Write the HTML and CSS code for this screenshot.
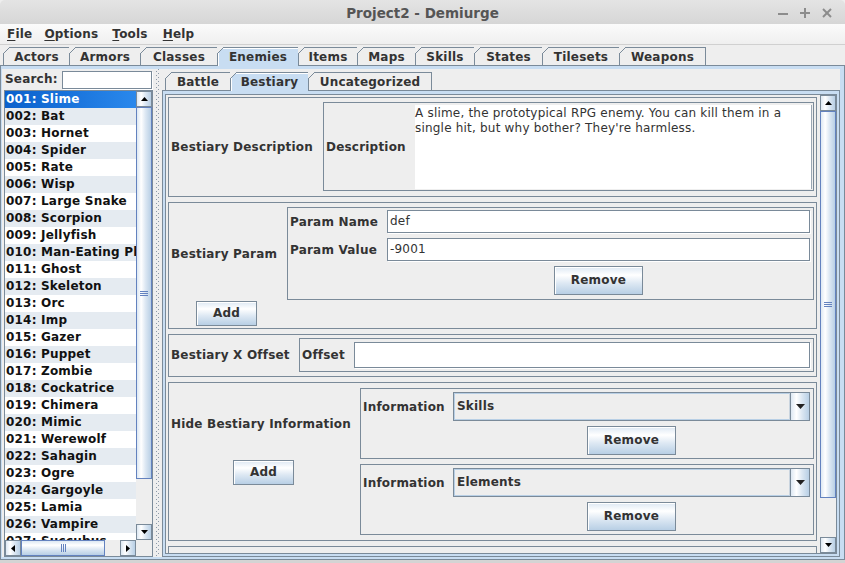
FILE: index.html
```html
<!DOCTYPE html>
<html>
<head>
<meta charset="utf-8">
<title>Project2 - Demiurge</title>
<link rel="stylesheet" href="styles.css">
</head>
<body>
<div class="window">
  <header class="titlebar">
    <div></div>
    <div class="title">Project2 - Demiurge</div>
    <div class="controls">
      <svg width="10" height="10" viewBox="0 0 10 10"><line x1="0" y1="6" x2="10" y2="6" stroke="#8c8c8c" stroke-width="2"/></svg>
      <svg width="10" height="10" viewBox="0 0 10 10"><line x1="0" y1="5" x2="10" y2="5" stroke="#8c8c8c" stroke-width="2"/><line x1="5" y1="0" x2="5" y2="10" stroke="#8c8c8c" stroke-width="2"/></svg>
      <svg width="10" height="10" viewBox="0 0 10 10"><line x1="1" y1="1" x2="9" y2="9" stroke="#8c8c8c" stroke-width="2"/><line x1="9" y1="1" x2="1" y2="9" stroke="#8c8c8c" stroke-width="2"/></svg>
    </div>
  </header>

  <nav class="menubar">
    <span class="menu"><u>F</u>ile</span>
    <span class="menu"><u>O</u>ptions</span>
    <span class="menu"><u>T</u>ools</span>
    <span class="menu"><u>H</u>elp</span>
  </nav>

  <div class="tabpane outer">
    <div class="tabrow top-tabs">
      <span class="tab">Actors</span>
      <span class="tab">Armors</span>
      <span class="tab">Classes</span>
      <span class="tab selected">Enemies</span>
      <span class="tab">Items</span>
      <span class="tab">Maps</span>
      <span class="tab">Skills</span>
      <span class="tab">States</span>
      <span class="tab">Tilesets</span>
      <span class="tab last">Weapons</span>
    </div>
    <div class="tabcontent outer-content">
      <div class="split">
        <div class="leftpane">
          <div class="searchrow">
            <span class="search-label">Search:</span>
            <div class="field search-field"></div>
          </div>
          <div class="listscroll">
            <div class="listmain">
              <div class="list">
                <div class="row sel">001: Slime</div>
                <div class="row">002: Bat</div>
                <div class="row">003: Hornet</div>
                <div class="row">004: Spider</div>
                <div class="row">005: Rate</div>
                <div class="row">006: Wisp</div>
                <div class="row">007: Large Snake</div>
                <div class="row">008: Scorpion</div>
                <div class="row">009: Jellyfish</div>
                <div class="row">010: Man-Eating Plant</div>
                <div class="row">011: Ghost</div>
                <div class="row">012: Skeleton</div>
                <div class="row">013: Orc</div>
                <div class="row">014: Imp</div>
                <div class="row">015: Gazer</div>
                <div class="row">016: Puppet</div>
                <div class="row">017: Zombie</div>
                <div class="row">018: Cockatrice</div>
                <div class="row">019: Chimera</div>
                <div class="row">020: Mimic</div>
                <div class="row">021: Werewolf</div>
                <div class="row">022: Sahagin</div>
                <div class="row">023: Ogre</div>
                <div class="row">024: Gargoyle</div>
                <div class="row">025: Lamia</div>
                <div class="row">026: Vampire</div>
                <div class="row">027: Succubus</div>
              </div>
              <div class="vscroll list-vs">
                <div class="sb-btn"><svg width="7" height="4" viewBox="0 0 7 4"><polygon points="0,4 7,4 3.5,0" fill="#000"/></svg></div>
                <div class="sb-track">
                  <div class="thumb-v list-thumb"><span class="grip-v"></span></div>
                </div>
                <div class="sb-btn"><svg width="7" height="4" viewBox="0 0 7 4"><polygon points="0,0 7,0 3.5,4" fill="#000"/></svg></div>
              </div>
            </div>
            <div class="hbar">
              <div class="hscroll">
                <div class="sb-btn"><svg width="4" height="7" viewBox="0 0 4 7"><polygon points="4,0 4,7 0,3.5" fill="#000"/></svg></div>
                <div class="sb-track-h">
                  <div class="thumb-h"><span class="grip-h"></span></div>
                </div>
                <div class="sb-btn"><svg width="4" height="7" viewBox="0 0 4 7"><polygon points="0,0 0,7 4,3.5" fill="#000"/></svg></div>
              </div>
              <div class="corner"></div>
            </div>
          </div>
        </div>

        <div class="divider"></div>

        <div class="rightpane">
          <div class="tabrow inner-tabs">
            <span class="tab">Battle</span>
            <span class="tab selected">Bestiary</span>
            <span class="tab last">Uncategorized</span>
          </div>
          <div class="tabcontent inner-content">
            <div class="scrollpane">
              <div class="viewport">
                <section class="sec s1">
                  <div class="sec-label">Bestiary Description</div>
                  <div class="box desc-box">
                    <div class="box-label">Description</div>
                    <div class="textarea">A slime, the prototypical RPG enemy. You can kill them in a<br>single hit, but why bother? They're harmless.</div>
                  </div>
                </section>

                <section class="sec s2">
                  <div class="sec-label">Bestiary Param</div>
                  <div class="box param-box">
                    <div class="box-label">Param Name</div>
                    <div class="field">def</div>
                    <div class="box-label">Param Value</div>
                    <div class="field">-9001</div>
                    <div></div>
                    <div class="btn remove">Remove</div>
                  </div>
                  <div class="btn add">Add</div>
                </section>

                <section class="sec s3">
                  <div class="sec-label">Bestiary X Offset</div>
                  <div class="box offset-box">
                    <div class="box-label">Offset</div>
                    <div class="field"></div>
                  </div>
                </section>

                <section class="sec s4">
                  <div class="sec-label">Hide Bestiary Information</div>
                  <div class="box info-box">
                    <div class="box-label">Information</div>
                    <div class="combo"><span class="combo-text">Skills</span><span class="combo-btn"><svg width="9" height="5" viewBox="0 0 9 5"><polygon points="0,0 9,0 4.5,5" fill="#222"/></svg></span></div>
                    <div></div>
                    <div class="btn remove">Remove</div>
                  </div>
                  <div class="btn add add4">Add</div>
                  <div class="box info-box">
                    <div class="box-label">Information</div>
                    <div class="combo"><span class="combo-text">Elements</span><span class="combo-btn"><svg width="9" height="5" viewBox="0 0 9 5"><polygon points="0,0 9,0 4.5,5" fill="#222"/></svg></span></div>
                    <div></div>
                    <div class="btn remove">Remove</div>
                  </div>
                </section>

                <section class="sec s5"></section>
              </div>
              <div class="vscroll main-vs">
                <div class="sb-btn"><svg width="7" height="4" viewBox="0 0 7 4"><polygon points="0,4 7,4 3.5,0" fill="#000"/></svg></div>
                <div class="sb-track">
                  <div class="thumb-v main-thumb"><span class="grip-v"></span></div>
                </div>
                <div class="sb-btn"><svg width="7" height="4" viewBox="0 0 7 4"><polygon points="0,0 7,0 3.5,4" fill="#000"/></svg></div>
              </div>
            </div>
          </div>
        </div>
      </div>
    </div>
  </div>
  <div class="frame-bottom"></div>
</div>
</body>
</html>
```
FILE: styles.css
```css
* { box-sizing: border-box; margin: 0; padding: 0; }
html, body { width: 845px; height: 563px; overflow: hidden; }
body {
  background: #eeeeee;
  font-family: "DejaVu Sans", sans-serif;
  font-size: 12px;
  letter-spacing: 0.2px;
  color: #333333;
}
.window {
  width: 845px;
  height: 563px;
  display: flex;
  flex-direction: column;
  background: #eeeeee;
}

/* title bar */
.titlebar {
  flex: none;
  height: 24px;
  display: grid;
  grid-template-columns: 1fr auto 1fr;
  align-items: center;
  padding-top: 2px;
  background: linear-gradient(#e4e4e4, #d6d6d6);
  border-radius: 5px 5px 0 0;
}
.title { font-weight: bold; font-size: 13.5px; color: #555555; letter-spacing: 0; }
.controls {
  justify-self: end;
  display: flex;
  align-items: center;
  gap: 12px;
  padding-right: 13px;
}
.controls svg { display: block; }

/* menu bar */
.menubar {
  flex: none;
  height: 21px;
  display: flex;
  align-items: center;
  padding-left: 1px;
  background: linear-gradient(#fbfbfb, #efefef);
  border-bottom: 1px solid #d0d0d0;
}
.menu { font-weight: bold; padding: 0 6px; }
.menu:nth-child(2) { margin-right: 2px; }
.menu:nth-child(3) { margin-right: 3px; }
.menu u { text-decoration: underline; text-underline-offset: 2px; }

/* tabbed panes */
.tabpane.outer { flex: 1; display: flex; flex-direction: column; min-height: 0; }
.tabrow {
  flex: none;
  display: flex;
  align-items: flex-end;
  height: 20px;
}
.top-tabs { padding-left: 3px; }
.tab {
  position: relative;
  height: 18px;
  line-height: 17px;
  padding-top: 1px;
  font-weight: bold;
  text-align: center;
  background: #eeeeee;
  border-left: 1px solid #7a8a99;
  border-top: 1px solid #7a8a99;
}
.tab::before {
  content: "";
  position: absolute;
  left: -1px;
  top: -1px;
  width: 7px;
  height: 7px;
  background: linear-gradient(to bottom right, #eeeeee 0, #eeeeee calc(50% - 0.7px), #7a8a99 calc(50% - 0.7px), #7a8a99 calc(50% + 0.7px), transparent calc(50% + 0.7px));
}
.tab.last { border-right: 1px solid #7a8a99; }
.tab.selected {
  background: #c8ddf2;
  height: 19px;
  margin-bottom: -1px;
  z-index: 1;
  border-color: #7a8a99;
  box-shadow: inset 1px 1px 0 #ffffff;
}

.top-tabs .tab:nth-child(1) { width: 66px; }
.top-tabs .tab:nth-child(2) { width: 71px; }
.top-tabs .tab:nth-child(3) { width: 77px; }
.top-tabs .tab:nth-child(4) { width: 81px; }
.top-tabs .tab:nth-child(5) { width: 59px; }
.top-tabs .tab:nth-child(6) { width: 58px; }
.top-tabs .tab:nth-child(7) { width: 59px; }
.top-tabs .tab:nth-child(8) { width: 68px; }
.top-tabs .tab:nth-child(9) { width: 77px; }
.top-tabs .tab:nth-child(10) { width: 87px; }

.tabcontent {
  flex: 1;
  min-height: 0;
  border: 1px solid #7a8a99;
  background: #c8ddf2;
  display: flex;
}
.outer-content { padding: 3px 4px 2px 1px; }

.split { flex: 1; display: flex; background: #eeeeee; min-width: 0; }

/* left pane */
.leftpane { width: 151px; flex: none; display: flex; flex-direction: column; }
.searchrow {
  height: 20px;
  flex: none;
  display: flex;
  align-items: center;
  padding-left: 3px;
}
.search-label { font-weight: bold; width: 57px; }
.field {
  background: #ffffff;
  border: 1px solid #7a8a99;
  box-shadow: 1px 1px 0 #ffffff;
  padding-left: 2px;
  white-space: nowrap;
  overflow: hidden;
}
.search-field { width: 90px; height: 18px; margin-top: 1px; }

.listscroll {
  flex: 1;
  min-height: 0;
  margin-left: 2px;
  margin-top: 1px;
  border: 1px solid #7a8a99;
  display: flex;
  flex-direction: column;
  background: #eeeeee;
}
.listmain { flex: 1; min-height: 0; display: flex; }
.list { flex: 1; overflow: hidden; background: #ffffff; }
.row {
  height: 17px;
  line-height: 17px;
  font-weight: bold;
  color: #111111;
  padding-left: 1px;
  white-space: nowrap;
  overflow: hidden;
}
.row:nth-child(even) { background: #e5ebf1; }
.row.sel {
  color: #ffffff;
  background: linear-gradient(to right, #0a60cc, #2a88ec);
}

/* scrollbars */
.vscroll {
  width: 16px;
  flex: none;
  display: flex;
  flex-direction: column;
  background: #eeeeee;
}
.sb-btn {
  width: 16px;
  height: 16px;
  flex: none;
  display: flex;
  align-items: center;
  justify-content: center;
  border: 1px solid #7a8a99;
  background: linear-gradient(to right, #dde8f3, #ffffff 30%, #dde8f3 60%, #b8cfe5);
}
.sb-btn svg { display: block; }
.sb-track { flex: 1; min-height: 0; display: flex; flex-direction: column; }
.thumb-v {
  display: flex;
  align-items: center;
  justify-content: center;
  border: 1px solid #6382bf;
  background: linear-gradient(to right, #dde8f3, #ffffff 30%, #dde8f3 60%, #b8cfe5);
}
.list-thumb { height: 372px; }
.main-thumb { height: 387px; }
.grip-v {
  width: 8px;
  height: 5px;
  background: repeating-linear-gradient(to bottom, #6382bf 0 1px, transparent 1px 2px);
}
.hbar { height: 16px; flex: none; display: flex; }
.hscroll { flex: 1; display: flex; }
.sb-track-h { flex: 1; display: flex; }
.thumb-h {
  width: 84px;
  display: flex;
  align-items: center;
  justify-content: center;
  border: 1px solid #6382bf;
  background: linear-gradient(to bottom, #dde8f3, #ffffff 30%, #dde8f3 60%, #b8cfe5);
}
.grip-h {
  width: 5px;
  height: 8px;
  background: repeating-linear-gradient(to right, #6382bf 0 1px, transparent 1px 2px);
}
.corner { width: 16px; flex: none; background: #eeeeee; }

/* divider */
.divider {
  width: 9px;
  flex: none;
  background-color: #eeeeee;
  background-image:
    conic-gradient(from 270deg at 1px 1px, #8c99a8 25%, transparent 0),
    conic-gradient(from 270deg at 1px 1px, #8c99a8 25%, transparent 0);
  background-size: 4px 4px, 4px 4px;
  background-position: 3px 2px, 5px 4px;
  background-repeat: repeat-y, repeat-y;
}

/* right pane */
.rightpane { flex: 1; min-width: 0; display: flex; flex-direction: column; }
.inner-tabs { padding-left: 3px; height: 21px; }
.inner-tabs .tab:nth-child(1) { width: 65px; }
.inner-tabs .tab:nth-child(2) { width: 78px; }
.inner-tabs .tab:nth-child(3) { width: 124px; }
.inner-content { padding: 3px 2px 2px 2px; }

.scrollpane {
  flex: 1;
  min-width: 0;
  border: 1px solid #7a8a99;
  background: #eeeeee;
  display: flex;
}
.viewport {
  flex: 1;
  min-width: 0;
  overflow: hidden;
  display: flex;
  flex-direction: column;
  gap: 5px;
  padding: 2px 3px 0 2px;
}

/* sections */
.sec {
  flex: none;
  border: 1px solid #7a8a99;
  display: grid;
  align-items: center;
}
.sec-label { font-weight: bold; padding-left: 2px; white-space: nowrap; }
.box {
  border: 1px solid #7a8a99;
  display: grid;
  align-items: center;
}
.box-label { font-weight: bold; padding-left: 2px; white-space: nowrap; }

.s1 {
  height: 100px;
  grid-template-columns: 154px 1fr;
  padding: 4px 2px 5px 0;
}
.desc-box {
  height: 89px;
  grid-template-columns: 91px 1fr;
  padding: 1px 1px 0 0;
}
.textarea {
  align-self: stretch;
  margin: 1px 0 1px 0;
  background: #ffffff;
  border-right: 1px solid #9aa6b3;
  line-height: 15px;
  padding-top: 1px;
  white-space: nowrap;
}

.s2 {
  height: 127px;
  grid-template-columns: 118px 1fr;
  grid-template-rows: 93px 1fr;
  padding: 4px 2px 2px 0;
}
.s2 .sec-label { grid-row: 1; grid-column: 1; }
.param-box {
  grid-row: 1;
  grid-column: 2;
  height: 93px;
  grid-template-columns: 99px 1fr;
  grid-template-rows: 23px 23px 29px;
  row-gap: 5px;
  padding: 2px 3px 4px 0;
}
.param-box .field { height: 23px; line-height: 21px; }

.btn {
  border: 1px solid #7a8a99;
  background: linear-gradient(to bottom, #dde8f3, #ffffff 30%, #dde8f3 60%, #b8cfe5);
  font-weight: bold;
  text-align: center;
  box-shadow: inset 1px 1px 0 #ffffff;
}
.remove { width: 89px; height: 29px; line-height: 27px; justify-self: center; }
.add { width: 61px; height: 25px; line-height: 23px; justify-self: start; }
.s2 .add { grid-row: 2; grid-column: 1; align-self: start; margin-top: 1px; margin-left: 27px; }

.s3 {
  height: 43px;
  grid-template-columns: 130px 1fr;
  padding: 3px 2px 4px 0;
}
.offset-box {
  height: 34px;
  grid-template-columns: 54px 1fr;
  padding: 3px 3px 3px 0;
}
.offset-box .field { height: 26px; }

.s4 {
  height: 159px;
  grid-template-columns: 191px 1fr;
  grid-template-rows: 71px 71px;
  row-gap: 5px;
  padding: 5px 2px 5px 0;
}
.s4 .sec-label { grid-row: 1; grid-column: 1; }
.s4 .add4 { grid-row: 2; grid-column: 1; align-self: start; margin-top: -4px; margin-left: 64px; }
.info-box {
  height: 71px;
  grid-template-columns: 92px 1fr;
  grid-template-rows: 29px 29px;
  row-gap: 5px;
  padding: 3px 3px 3px 0;
}
.combo {
  height: 29px;
  display: flex;
  border: 1px solid #7a8a99;
  background: #eeeeee;
}
.combo-text {
  flex: 1;
  font-weight: bold;
  line-height: 25px;
  padding-left: 2px;
  border: 1px solid #b8cfe5;
  border-right: 1px solid #c9d4df;
}
.combo-btn {
  width: 19px;
  flex: none;
  display: flex;
  align-items: center;
  justify-content: center;
  border-left: 1px solid #7a8a99;
  background: linear-gradient(to right, #dde8f3, #ffffff 30%, #dde8f3 60%, #b8cfe5);
}
.combo-btn svg { display: block; }

.s5 { height: 40px; }

.frame-bottom { flex: none; height: 3px; background: #d4d4d4; }
```
